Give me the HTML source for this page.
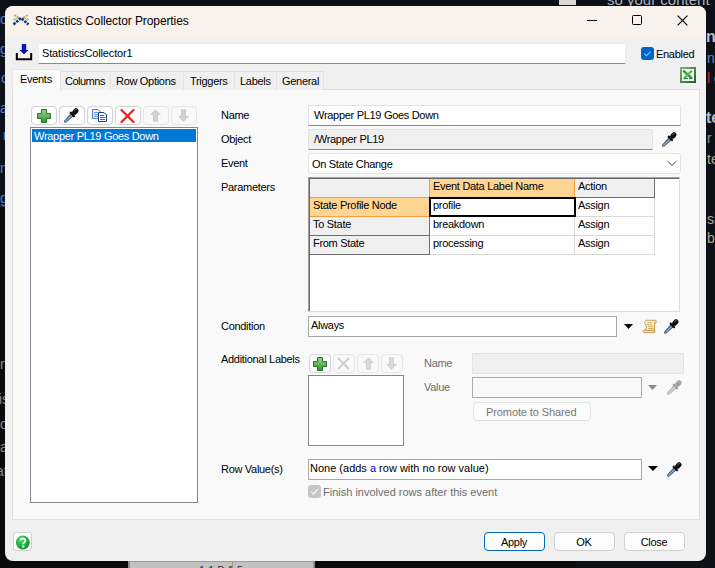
<!DOCTYPE html><html><head><meta charset="utf-8"><style>
html,body{margin:0;padding:0;width:715px;height:568px;overflow:hidden;background:#0d1117;}
.a{position:absolute;box-sizing:border-box;}
.t{position:absolute;white-space:pre;font-family:"Liberation Sans",sans-serif;}
svg.a{display:block;}
</style></head><body>
<div class="a" style="left:559px;top:0px;width:17px;height:5px;background:#d9d9d9;"></div>
<div class="a" style="left:0px;top:556px;width:576px;height:12px;background:#0a0a0a;"></div>
<div class="a" style="left:128px;top:561px;width:187px;height:7px;background:#c2c2c2;border-left:2px solid #8c8c8c;border-right:2px solid #8c8c8c;border-top:1px solid #9a9a9a;"></div>
<div class="a" style="left:232px;top:561px;width:1px;height:7px;background:#9a9a9a;"></div>
<div class="t" style="left:199px;top:565px;font-size:11px;line-height:11px;color:#333;letter-spacing:0px">1.1 B.1 5</div><div class="a" style="left:0px;top:206px;width:5px;height:1px;background:#30363d;"></div>
<div class="a" style="left:0px;top:207px;width:5px;height:361px;background:#0a0a0a;"></div>
<div class="t" style="left:607px;top:-8.2px;font-size:15px;line-height:15px;color:#aab4c0;">so your content</div>
<div class="t" style="left:706px;top:28.5px;font-size:16px;line-height:16px;color:#b4c0cc;font-weight:bold;">n</div>
<div class="t" style="left:707px;top:50.6px;font-size:14px;line-height:14px;color:#5f8fb8;">n c</div>
<div class="t" style="left:707px;top:71.1px;font-size:14px;line-height:14px;color:#b8c4d0;"><span style="color:#c03030">l</span> e</div>
<div class="t" style="left:706px;top:110.0px;font-size:16px;line-height:16px;color:#b4c0cc;font-weight:bold;">te</div>
<div class="t" style="left:707px;top:131.1px;font-size:14px;line-height:14px;color:#8090a0;">r c</div>
<div class="t" style="left:707px;top:152.1px;font-size:14px;line-height:14px;color:#b0a890;">te</div>
<div class="t" style="left:707px;top:212.1px;font-size:14px;line-height:14px;color:#b0a890;">si</div>
<div class="t" style="left:707px;top:231.1px;font-size:14px;line-height:14px;color:#b0a890;">be</div>
<div class="t" style="left:0px;top:12.1px;font-size:14px;line-height:14px;color:#4a80d0;">o</div>
<div class="t" style="left:0px;top:42.1px;font-size:14px;line-height:14px;color:#4a80d0;">g</div>
<div class="t" style="left:1px;top:71.1px;font-size:14px;line-height:14px;color:#4a80d0;">c</div>
<div class="t" style="left:0px;top:101.1px;font-size:14px;line-height:14px;color:#4a80d0;">a</div>
<div class="t" style="left:3px;top:128.1px;font-size:14px;line-height:14px;color:#4a80d0;">r</div>
<div class="t" style="left:0px;top:161.1px;font-size:14px;line-height:14px;color:#4a80d0;">n</div>
<div class="t" style="left:0px;top:191.1px;font-size:14px;line-height:14px;color:#4a80d0;">g</div>
<div class="t" style="left:0px;top:357.1px;font-size:14px;line-height:14px;color:#8a8a8a;">n</div>
<div class="t" style="left:-1px;top:392.1px;font-size:14px;line-height:14px;color:#8a8a8a;">is</div>
<div class="t" style="left:0px;top:417.1px;font-size:14px;line-height:14px;color:#8a8a8a;">o</div>
<div class="t" style="left:-4px;top:440.1px;font-size:14px;line-height:14px;color:#8a8a8a;">ta</div>
<div class="t" style="left:-4px;top:464.1px;font-size:14px;line-height:14px;color:#8a8a8a;">at</div>
<div class="a" style="left:5px;top:6px;width:701px;height:555px;background:#f0f0f0;border-radius:8px;overflow:hidden;"></div>
<div class="a" style="left:5px;top:6px;width:701px;height:30px;background:#f9f1eb;border-radius:8px 8px 0 0;"></div>
<svg class="a" style="left:12px;top:13px" width="18" height="13" viewBox="0 0 18 13">
<g stroke="#c9a46a" stroke-width="1.5" stroke-dasharray="2.4 0.8" fill="none"><path d="M2.2 2 L7.2 5"/><path d="M1.5 7 L6.5 4"/><path d="M15.8 2 L10.8 5"/><path d="M16.5 7 L11.5 4"/></g>
<path d="M1.5 11.5 L9 5 L16.5 11.5" fill="none" stroke="#0a3d7a" stroke-width="2.6" stroke-dasharray="2.6 1"/>
</svg>
<div class="t" style="left:35px;top:14.84px;font-size:12px;line-height:12px;letter-spacing:-0.1px;color:#000;">Statistics Collector Properties</div>
<div class="a" style="left:587px;top:20px;width:10px;height:1px;background:#000;"></div>
<div class="a" style="left:632px;top:15px;width:10px;height:10px;border:1px solid #000;border-radius:1.5px;"></div>
<svg class="a" style="left:677px;top:15px" width="11" height="11" viewBox="0 0 11 11"><path d="M0.6 0.6 L10.4 10.4 M10.4 0.6 L0.6 10.4" stroke="#000" stroke-width="1.15"/></svg>
<svg class="a" style="left:15px;top:43px" width="18" height="18" viewBox="0 0 18 18">
<path d="M6.8 1 H11.2 V7 H13.6 L9 11.2 L4.4 7 H6.8 Z" fill="#0a14b4"/>
<path d="M1.8 10 V16.2 H16.2 V10" fill="none" stroke="#000" stroke-width="2"/>
</svg>
<div class="a" style="left:38px;top:43px;width:588px;height:21px;background:#fff;border:1px solid #ececec;border-bottom:1px solid #8a8a8a;border-radius:2px 2px 0 0;"></div>
<div class="t" style="left:42px;top:47.69px;font-size:11px;line-height:11px;letter-spacing:-0.15px;color:#000;">StatisticsCollector1</div>
<div class="a" style="left:641px;top:47px;width:13px;height:13px;background:#0063c8;border-radius:3px;"></div>
<svg class="a" style="left:641px;top:47px" width="13" height="13" viewBox="0 0 13 13"><path d="M3.4 6.8 L5.5 8.8 L9.6 4.6" fill="none" stroke="#fff" stroke-width="0.9"/></svg>
<div class="t" style="left:656px;top:48.69px;font-size:11px;line-height:11px;letter-spacing:-0.3px;color:#000;">Enabled</div>
<svg class="a" style="left:680px;top:67px" width="16" height="16" viewBox="0 0 16 16">
<defs><linearGradient id="xg" x1="0" y1="0" x2="1" y2="1"><stop offset="0" stop-color="#7fb87a"/><stop offset="1" stop-color="#1f5a1f"/></linearGradient></defs>
<rect x="0" y="0" width="16" height="16" fill="url(#xg)"/>
<rect x="2" y="2" width="12" height="12" fill="#f4fbf2"/>
<path d="M3.2 3.6 L11.8 11.2" stroke="#3f9a45" stroke-width="2.6"/>
<path d="M12 3.6 L4 11.2" stroke="#5cb060" stroke-width="2.2"/>
<path d="M3.5 11.6 H8 M9 11.6 H12.5" stroke="#2a6f2a" stroke-width="1"/>
</svg>
<div class="a" style="left:12px;top:89px;width:688px;height:431px;background:#f9f9f9;border:1px solid #e0e0e0;"></div>
<div class="a" style="left:12px;top:69px;width:49px;height:22px;background:#f9f9f9;border:1px solid #e6e6e6;border-bottom:none;"></div>
<div class="t" style="left:20px;top:73.69px;font-size:11px;line-height:11px;letter-spacing:-0.3px;color:#000;">Events</div>
<div class="a" style="left:60px;top:71px;width:51px;height:19px;background:#f0f0f0;border:1px solid #e3e3e3;border-bottom:none;"></div>
<div class="t" style="left:65px;top:75.69px;font-size:11px;line-height:11px;letter-spacing:-0.5px;color:#000;">Columns</div>
<div class="a" style="left:110px;top:71px;width:74px;height:19px;background:#f0f0f0;border:1px solid #e3e3e3;border-bottom:none;"></div>
<div class="t" style="left:116px;top:75.69px;font-size:11px;line-height:11px;letter-spacing:-0.3px;color:#000;">Row Options</div>
<div class="a" style="left:183px;top:71px;width:52px;height:19px;background:#f0f0f0;border:1px solid #e3e3e3;border-bottom:none;"></div>
<div class="t" style="left:190px;top:75.69px;font-size:11px;line-height:11px;letter-spacing:-0.3px;color:#000;">Triggers</div>
<div class="a" style="left:234px;top:71px;width:43px;height:19px;background:#f0f0f0;border:1px solid #e3e3e3;border-bottom:none;"></div>
<div class="t" style="left:240px;top:75.69px;font-size:11px;line-height:11px;letter-spacing:-0.3px;color:#000;">Labels</div>
<div class="a" style="left:276px;top:71px;width:48px;height:19px;background:#f0f0f0;border:1px solid #e3e3e3;border-bottom:none;"></div>
<div class="t" style="left:282px;top:75.69px;font-size:11px;line-height:11px;letter-spacing:-0.3px;color:#000;">General</div>
<div class="a" style="left:31px;top:106px;width:26px;height:19px;background:#fdfdfd;border:1px solid #d4d4d4;border-radius:4px;"></div>
<div class="a" style="left:59px;top:106px;width:26px;height:19px;background:#fdfdfd;border:1px solid #d4d4d4;border-radius:4px;"></div>
<div class="a" style="left:87px;top:106px;width:26px;height:19px;background:#fdfdfd;border:1px solid #d4d4d4;border-radius:4px;"></div>
<div class="a" style="left:115px;top:106px;width:26px;height:19px;background:#fdfdfd;border:1px solid #d4d4d4;border-radius:4px;"></div>
<div class="a" style="left:143px;top:106px;width:26px;height:19px;background:#f9f9f9;border:1px solid #e6e6e6;border-radius:4px;"></div>
<div class="a" style="left:171px;top:106px;width:26px;height:19px;background:#f9f9f9;border:1px solid #e6e6e6;border-radius:4px;"></div>
<svg class="a" style="left:37px;top:109px" width="14" height="14" viewBox="0 0 14 14">
<defs><linearGradient id="gp37" x1="0" y1="0" x2="0" y2="1"><stop offset="0" stop-color="#8fd78a"/><stop offset="1" stop-color="#2f9a2f"/></linearGradient></defs>
<path d="M4.5 0.5 H9.5 V4.5 H13.5 V9.5 H9.5 V13.5 H4.5 V9.5 H0.5 V4.5 H4.5 Z" fill="url(#gp37)" stroke="#2d6e2d" stroke-width="1"/>
</svg>
<svg class="a" style="left:63px;top:107px" width="17" height="17" viewBox="0 0 17 17">
<defs><linearGradient id="ed63_107" x1="0" y1="0" x2="1" y2="0"><stop offset="0" stop-color="#2f4866"/><stop offset="0.6" stop-color="#9ab8d4"/><stop offset="1" stop-color="#2f4866"/></linearGradient></defs>
<g transform="translate(13.2,3.6) rotate(45)">
<path d="M-1.6 6 L1.6 6 L1.1 15.3 L0 16.6 L-1.1 15.3 Z" fill="url(#ed63_107)" stroke="#2a3a50" stroke-width="0.6"/>
<rect x="-3.4" y="4.3" width="6.8" height="2.2" rx="0.9" fill="#0c0c0c"/>
<rect x="-2.5" y="-2.3" width="5" height="7" rx="2.5" fill="#0c0c0c"/>
<rect x="-1.6" y="-1.8" width="1.2" height="3.5" rx="0.6" fill="#555"/>
</g>
</svg>
<svg class="a" style="left:92px;top:109px" width="16" height="14" viewBox="0 0 16 14">
<path d="M0.5 0.5 H6 L8.5 3 V9.5 H0.5 Z" fill="#e8f0fa" stroke="#5a7fb8"/>
<path d="M2 3.5 H6 M2 5.5 H6.5 M2 7.5 H6.5" stroke="#6a9ad8"/>
<path d="M6.5 3.5 H12 L14.5 6 V12.5 H6.5 Z" fill="#f4f8fd" stroke="#1f3f8a"/>
<path d="M8 6.5 H12 M8 8.5 H13 M8 10.5 H13" stroke="#3a6ac8"/>
</svg>
<svg class="a" style="left:120px;top:109px" width="15" height="14" viewBox="0 0 15 14"><path d="M1.5 1 L13.5 13 M13.5 1 L1.5 13" stroke="#e8221a" stroke-width="2.2" stroke-linecap="round"/></svg>
<svg class="a" style="left:150px;top:109px" width="11" height="13" viewBox="0 0 11 13"><path d="M5.5 0.8 L10.2 5.5 H7.5 V12.2 H3.5 V5.5 H0.8 Z" fill="#d2d2d2" stroke="#c2c2c2" stroke-width="0.8"/></svg>
<svg class="a" style="left:178px;top:109px" width="11" height="13" viewBox="0 0 11 13"><path d="M5.5 12.2 L10.2 7.5 H7.5 V0.8 H3.5 V7.5 H0.8 Z" fill="#d2d2d2" stroke="#c2c2c2" stroke-width="0.8"/></svg>
<div class="a" style="left:30px;top:127px;width:168px;height:376px;background:#fff;border:1px solid #828790;"></div>
<div class="a" style="left:32px;top:129px;width:164px;height:13px;background:#0078d7;"></div>
<div class="t" style="left:34px;top:130.69px;font-size:11px;line-height:11px;letter-spacing:-0.3px;color:#fff;">Wrapper PL19 Goes Down</div>
<div class="t" style="left:221px;top:109.69px;font-size:11px;line-height:11px;letter-spacing:-0.3px;color:#000;">Name</div>
<div class="t" style="left:221px;top:133.69px;font-size:11px;line-height:11px;letter-spacing:-0.3px;color:#000;">Object</div>
<div class="t" style="left:221px;top:157.69px;font-size:11px;line-height:11px;letter-spacing:-0.3px;color:#000;">Event</div>
<div class="t" style="left:221px;top:181.69px;font-size:11px;line-height:11px;letter-spacing:-0.3px;color:#000;">Parameters</div>
<div class="t" style="left:221px;top:320.69px;font-size:11px;line-height:11px;letter-spacing:-0.3px;color:#000;">Condition</div>
<div class="t" style="left:221px;top:353.69px;font-size:11px;line-height:11px;letter-spacing:-0.3px;color:#000;">Additional Labels</div>
<div class="t" style="left:221px;top:463.69px;font-size:11px;line-height:11px;letter-spacing:-0.3px;color:#000;">Row Value(s)</div>
<div class="a" style="left:308px;top:105px;width:373px;height:21px;background:#fff;border:1px solid #e2e2e2;border-bottom:1px solid #8a8a8a;border-radius:2px 2px 0 0;"></div>
<div class="t" style="left:314px;top:109.69px;font-size:11px;line-height:11px;letter-spacing:-0.3px;color:#000;">Wrapper PL19 Goes Down</div>
<div class="a" style="left:308px;top:129px;width:345px;height:21px;background:#f0f0f0;border:1px solid #e2e2e2;border-bottom:1px solid #8a8a8a;border-radius:2px 2px 0 0;"></div>
<div class="t" style="left:314px;top:133.69px;font-size:11px;line-height:11px;letter-spacing:-0.3px;color:#000;">/Wrapper PL19</div>
<svg class="a" style="left:661px;top:131px" width="17" height="17" viewBox="0 0 17 17">
<defs><linearGradient id="ed661_131" x1="0" y1="0" x2="1" y2="0"><stop offset="0" stop-color="#2f4866"/><stop offset="0.6" stop-color="#9ab8d4"/><stop offset="1" stop-color="#2f4866"/></linearGradient></defs>
<g transform="translate(13.2,3.6) rotate(45)">
<path d="M-1.6 6 L1.6 6 L1.1 15.3 L0 16.6 L-1.1 15.3 Z" fill="url(#ed661_131)" stroke="#2a3a50" stroke-width="0.6"/>
<rect x="-3.4" y="4.3" width="6.8" height="2.2" rx="0.9" fill="#0c0c0c"/>
<rect x="-2.5" y="-2.3" width="5" height="7" rx="2.5" fill="#0c0c0c"/>
<rect x="-1.6" y="-1.8" width="1.2" height="3.5" rx="0.6" fill="#555"/>
</g>
</svg>
<div class="a" style="left:308px;top:153px;width:373px;height:21px;background:#fff;border:1px solid #e2e2e2;border-radius:3px;"></div>
<div class="t" style="left:312px;top:158.69px;font-size:11px;line-height:11px;letter-spacing:-0.3px;color:#000;">On State Change</div>
<svg class="a" style="left:667px;top:160px" width="10" height="7" viewBox="0 0 10 7"><path d="M0.8 1.2 L5 5.4 L9.2 1.2" fill="none" stroke="#333" stroke-width="1"/></svg>
<div class="a" style="left:308px;top:177px;width:372px;height:135px;background:#fff;border-left:1px solid #a0a0a0;border-top:1px solid #a0a0a0;border-right:1px solid #dcdcdc;border-bottom:1px solid #dcdcdc;"></div>
<div class="a" style="left:309px;top:178px;width:370px;height:1px;background:#696969;"></div>
<div class="a" style="left:309px;top:178px;width:1px;height:133px;background:#696969;"></div>
<div class="a" style="left:310px;top:179px;width:120px;height:19px;background:#f0f0f0;"></div>
<div class="a" style="left:430px;top:179px;width:145px;height:18px;background:#ffd591;"></div>
<div class="a" style="left:575px;top:179px;width:80px;height:18px;background:#f0f0f0;"></div>
<div class="a" style="left:310px;top:198px;width:119px;height:18px;background:#ffd591;"></div>
<div class="a" style="left:310px;top:217px;width:119px;height:18px;background:#f0f0f0;"></div>
<div class="a" style="left:310px;top:236px;width:119px;height:18px;background:#f0f0f0;"></div>
<div class="a" style="left:310px;top:197px;width:119px;height:1px;background:#f5a040;"></div>
<div class="a" style="left:310px;top:216px;width:119px;height:1px;background:#f5a040;"></div>
<div class="a" style="left:310px;top:235px;width:119px;height:1px;background:#6d6d6d;"></div>
<div class="a" style="left:310px;top:254px;width:119px;height:1px;background:#6d6d6d;"></div>
<div class="a" style="left:429px;top:198px;width:1px;height:57px;background:#6d6d6d;"></div>
<div class="a" style="left:429px;top:179px;width:1px;height:19px;background:#f5a040;"></div>
<div class="a" style="left:574px;top:179px;width:1px;height:18px;background:#f5a040;"></div>
<div class="a" style="left:575px;top:197px;width:80px;height:1px;background:#6d6d6d;"></div>
<div class="a" style="left:654px;top:179px;width:1px;height:19px;background:#6d6d6d;"></div>
<div class="a" style="left:430px;top:216px;width:225px;height:1px;background:#d9d9d9;"></div>
<div class="a" style="left:430px;top:235px;width:225px;height:1px;background:#d9d9d9;"></div>
<div class="a" style="left:430px;top:254px;width:225px;height:1px;background:#d9d9d9;"></div>
<div class="a" style="left:574px;top:198px;width:1px;height:57px;background:#d9d9d9;"></div>
<div class="a" style="left:654px;top:198px;width:1px;height:57px;background:#d9d9d9;"></div>
<div class="t" style="left:433px;top:180.69px;font-size:11px;line-height:11px;letter-spacing:-0.3px;color:#000;">Event Data Label Name</div>
<div class="t" style="left:578px;top:180.69px;font-size:11px;line-height:11px;letter-spacing:-0.3px;color:#000;">Action</div>
<div class="t" style="left:313px;top:199.69px;font-size:11px;line-height:11px;letter-spacing:-0.3px;color:#000;">State Profile Node</div>
<div class="t" style="left:433px;top:199.69px;font-size:11px;line-height:11px;letter-spacing:-0.3px;color:#000;">profile</div>
<div class="t" style="left:578px;top:199.69px;font-size:11px;line-height:11px;letter-spacing:-0.3px;color:#000;">Assign</div>
<div class="t" style="left:313px;top:218.69px;font-size:11px;line-height:11px;letter-spacing:-0.3px;color:#000;">To State</div>
<div class="t" style="left:433px;top:218.69px;font-size:11px;line-height:11px;letter-spacing:-0.3px;color:#000;">breakdown</div>
<div class="t" style="left:578px;top:218.69px;font-size:11px;line-height:11px;letter-spacing:-0.3px;color:#000;">Assign</div>
<div class="t" style="left:313px;top:237.69px;font-size:11px;line-height:11px;letter-spacing:-0.3px;color:#000;">From State</div>
<div class="t" style="left:433px;top:237.69px;font-size:11px;line-height:11px;letter-spacing:-0.3px;color:#000;">processing</div>
<div class="t" style="left:578px;top:237.69px;font-size:11px;line-height:11px;letter-spacing:-0.3px;color:#000;">Assign</div>
<div class="a" style="left:429px;top:197px;width:147px;height:20px;border:2px solid #000;"></div>
<div class="a" style="left:308px;top:316px;width:309px;height:21px;background:#fff;border:1px solid #a8a8a8;"></div>
<div class="t" style="left:311px;top:319.69px;font-size:11px;line-height:11px;letter-spacing:-0.3px;color:#000;">Always</div>
<svg class="a" style="left:624px;top:324px" width="9" height="5" viewBox="0 0 9 5"><path d="M0 0 L9 0 L4.5 5 Z" fill="#000"/></svg>
<svg class="a" style="left:642px;top:319px" width="16" height="15" viewBox="0 0 16 15">
<defs><linearGradient id="scg" x1="0" y1="0" x2="1" y2="1"><stop offset="0" stop-color="#fffbe8"/><stop offset="0.6" stop-color="#f8e6b4"/><stop offset="1" stop-color="#f0c26a"/></linearGradient></defs>
<path d="M4.2 1.3 H13.4 C14.8 1.3 14.8 4 13.2 4 H12.6 V11.6 H3 C3.8 10.4 4.4 9.4 4.4 8.2 C4.4 6.6 2.8 5.6 2.8 3.6 C2.8 2.1 3.3 1.3 4.2 1.3 Z" fill="url(#scg)" stroke="#c0974c" stroke-width="0.9"/>
<path d="M5.2 3.5 H9.6 M4.7 5.5 H9.8 M5.6 7.5 H10.6 M6.2 9.5 H11.2" stroke="#c9a565" stroke-width="0.8"/>
<path d="M12.6 4 C12.6 3 13.2 2.4 13.6 2.4" fill="none" stroke="#c0974c" stroke-width="0.8"/>
<path d="M1.6 11.3 H12.8 V13.7 H2.2 C1 13.7 0.8 11.3 1.6 11.3 Z" fill="#f7dea0" stroke="#c0974c" stroke-width="0.9"/>
</svg>
<svg class="a" style="left:663px;top:318px" width="17" height="17" viewBox="0 0 17 17">
<defs><linearGradient id="ed663_318" x1="0" y1="0" x2="1" y2="0"><stop offset="0" stop-color="#2f4866"/><stop offset="0.6" stop-color="#9ab8d4"/><stop offset="1" stop-color="#2f4866"/></linearGradient></defs>
<g transform="translate(13.2,3.6) rotate(45)">
<path d="M-1.6 6 L1.6 6 L1.1 15.3 L0 16.6 L-1.1 15.3 Z" fill="url(#ed663_318)" stroke="#2a3a50" stroke-width="0.6"/>
<rect x="-3.4" y="4.3" width="6.8" height="2.2" rx="0.9" fill="#0c0c0c"/>
<rect x="-2.5" y="-2.3" width="5" height="7" rx="2.5" fill="#0c0c0c"/>
<rect x="-1.6" y="-1.8" width="1.2" height="3.5" rx="0.6" fill="#555"/>
</g>
</svg>
<div class="a" style="left:309px;top:354px;width:22px;height:19px;background:#fdfdfd;border:1px solid #d4d4d4;border-radius:4px;"></div>
<div class="a" style="left:333px;top:354px;width:22px;height:19px;background:#f9f9f9;border:1px solid #e6e6e6;border-radius:4px;"></div>
<div class="a" style="left:357px;top:354px;width:22px;height:19px;background:#f9f9f9;border:1px solid #e6e6e6;border-radius:4px;"></div>
<div class="a" style="left:381px;top:354px;width:22px;height:19px;background:#f9f9f9;border:1px solid #e6e6e6;border-radius:4px;"></div>
<svg class="a" style="left:313px;top:357px" width="14" height="14" viewBox="0 0 14 14">
<defs><linearGradient id="gp313" x1="0" y1="0" x2="0" y2="1"><stop offset="0" stop-color="#8fd78a"/><stop offset="1" stop-color="#2f9a2f"/></linearGradient></defs>
<path d="M4.5 0.5 H9.5 V4.5 H13.5 V9.5 H9.5 V13.5 H4.5 V9.5 H0.5 V4.5 H4.5 Z" fill="url(#gp313)" stroke="#2d6e2d" stroke-width="1"/>
</svg>
<svg class="a" style="left:336px;top:357px" width="15" height="13" viewBox="0 0 15 13"><path d="M2 1 L13 12 M13 1 L2 12" stroke="#cfcfcf" stroke-width="2"/></svg>
<svg class="a" style="left:363px;top:357px" width="11" height="13" viewBox="0 0 11 13"><path d="M5.5 0.8 L10.2 5.5 H7.5 V12.2 H3.5 V5.5 H0.8 Z" fill="#d8d8d8" stroke="#c8c8c8" stroke-width="0.8"/></svg>
<svg class="a" style="left:386px;top:357px" width="11" height="13" viewBox="0 0 11 13"><path d="M5.5 12.2 L10.2 7.5 H7.5 V0.8 H3.5 V7.5 H0.8 Z" fill="#d8d8d8" stroke="#c8c8c8" stroke-width="0.8"/></svg>
<div class="a" style="left:308px;top:375px;width:96px;height:71px;background:#fff;border:1px solid #828790;"></div>
<div class="t" style="left:424px;top:357.69px;font-size:11px;line-height:11px;letter-spacing:-0.3px;color:#6d6d6d;">Name</div>
<div class="t" style="left:424px;top:381.69px;font-size:11px;line-height:11px;letter-spacing:-0.3px;color:#6d6d6d;">Value</div>
<div class="a" style="left:472px;top:353px;width:212px;height:21px;background:#f0f0f0;border:1px solid #e3e3e3;"></div>
<div class="a" style="left:472px;top:377px;width:170px;height:21px;background:#f9f9f9;border:1px solid #acacac;"></div>
<svg class="a" style="left:648px;top:385px" width="9" height="5" viewBox="0 0 9 5"><path d="M0 0 L9 0 L4.5 5 Z" fill="#8a8a8a"/></svg>
<svg class="a" style="left:666px;top:379px" width="17" height="17" viewBox="0 0 17 17">
<defs><linearGradient id="ed666_379" x1="0" y1="0" x2="1" y2="0"><stop offset="0" stop-color="#a8a8a8"/><stop offset="0.6" stop-color="#e0e0e0"/><stop offset="1" stop-color="#a8a8a8"/></linearGradient></defs>
<g transform="translate(13.2,3.6) rotate(45)">
<path d="M-1.6 6 L1.6 6 L1.1 15.3 L0 16.6 L-1.1 15.3 Z" fill="url(#ed666_379)" stroke="#9a9a9a" stroke-width="0.6"/>
<rect x="-3.4" y="4.3" width="6.8" height="2.2" rx="0.9" fill="#a2a2a2"/>
<rect x="-2.5" y="-2.3" width="5" height="7" rx="2.5" fill="#a2a2a2"/>
<rect x="-1.6" y="-1.8" width="1.2" height="3.5" rx="0.6" fill="#b5b5b5"/>
</g>
</svg>
<div class="a" style="left:473px;top:402px;width:118px;height:19px;background:#fbfbfb;border:1px solid #e3e3e3;border-radius:4px;"></div>
<div class="t" style="left:486px;top:406.69px;font-size:11px;line-height:11px;letter-spacing:-0.1px;color:#777;">Promote to Shared</div>
<div class="a" style="left:308px;top:459px;width:334px;height:21px;background:#fff;border:1px solid #a8a8a8;"></div>
<div class="t" style="left:310px;top:462.69px;font-size:11px;line-height:11px;letter-spacing:0px;color:#000;">None (adds <span style="color:#0000e0">a</span> row with no row value)</div>
<svg class="a" style="left:648px;top:466px" width="10" height="5" viewBox="0 0 10 5"><path d="M0 0 L10 0 L5.0 5 Z" fill="#000"/></svg>
<svg class="a" style="left:666px;top:461px" width="17" height="17" viewBox="0 0 17 17">
<defs><linearGradient id="ed666_461" x1="0" y1="0" x2="1" y2="0"><stop offset="0" stop-color="#2f4866"/><stop offset="0.6" stop-color="#9ab8d4"/><stop offset="1" stop-color="#2f4866"/></linearGradient></defs>
<g transform="translate(13.2,3.6) rotate(45)">
<path d="M-1.6 6 L1.6 6 L1.1 15.3 L0 16.6 L-1.1 15.3 Z" fill="url(#ed666_461)" stroke="#2a3a50" stroke-width="0.6"/>
<rect x="-3.4" y="4.3" width="6.8" height="2.2" rx="0.9" fill="#0c0c0c"/>
<rect x="-2.5" y="-2.3" width="5" height="7" rx="2.5" fill="#0c0c0c"/>
<rect x="-1.6" y="-1.8" width="1.2" height="3.5" rx="0.6" fill="#555"/>
</g>
</svg>
<div class="a" style="left:308px;top:485px;width:13px;height:13px;background:#c6c6c6;border-radius:3px;"></div>
<svg class="a" style="left:308px;top:485px" width="13" height="13" viewBox="0 0 13 13"><path d="M3.2 6.8 L5.4 9 L9.8 4.4" fill="none" stroke="#fff" stroke-width="1.1"/></svg>
<div class="t" style="left:323px;top:486.69px;font-size:11px;line-height:11px;letter-spacing:0px;color:#6d6d6d;">Finish involved rows after this event</div>
<div class="a" style="left:13px;top:532px;width:19px;height:19px;background:#fdfdfd;border:1px solid #d0d0d0;border-radius:3px;"></div>
<svg class="a" style="left:15px;top:535px" width="15" height="15" viewBox="0 0 15 15">
<defs><radialGradient id="hg" cx="0.35" cy="0.3" r="0.8"><stop offset="0" stop-color="#3be35a"/><stop offset="1" stop-color="#078a24"/></radialGradient></defs>
<circle cx="7.8" cy="7.5" r="6.9" fill="url(#hg)"/>
<path d="M5.6 5.4 C5.6 2.9 10.4 2.9 10.4 5.4 C10.4 7.2 8.3 7.2 8.3 9.2" fill="none" stroke="#fff" stroke-width="1.9"/>
<rect x="7.2" y="10.4" width="2.2" height="2.1" fill="#fff"/>
</svg>
<div class="a" style="left:484px;top:532px;width:61px;height:19px;background:#fdfdfd;border:1px solid #0067c0;border-radius:4px;"></div>
<div class="t" style="left:483.5px;top:533px;width:61px;height:19px;line-height:19px;text-align:center;font-size:11px;letter-spacing:-0.3px;color:#000">Apply</div>
<div class="a" style="left:554px;top:532px;width:61px;height:19px;background:#fdfdfd;border:1px solid #d0d0d0;border-radius:4px;"></div>
<div class="t" style="left:553.5px;top:533px;width:61px;height:19px;line-height:19px;text-align:center;font-size:11px;letter-spacing:-0.3px;color:#000">OK</div>
<div class="a" style="left:624px;top:532px;width:61px;height:19px;background:#fdfdfd;border:1px solid #d0d0d0;border-radius:4px;"></div>
<div class="t" style="left:623.5px;top:533px;width:61px;height:19px;line-height:19px;text-align:center;font-size:11px;letter-spacing:-0.3px;color:#000">Close</div>
</body></html>
